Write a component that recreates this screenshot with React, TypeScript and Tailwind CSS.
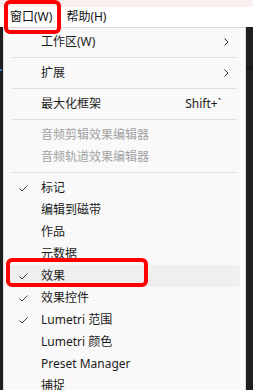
const font = { fontFamily: '"Noto Sans", "Noto Sans CJK SC", sans-serif' };

type Item =
  | { kind: 'item'; label: string; checked?: boolean; disabled?: boolean; sub?: boolean; shortcut?: string; hover?: boolean }
  | { kind: 'sep' };

const items: Item[] = [
  { kind: 'item', label: '工作区(W)', sub: true },
  { kind: 'sep' },
  { kind: 'item', label: '扩展', sub: true },
  { kind: 'sep' },
  { kind: 'item', label: '最大化框架', shortcut: 'Shift+`' },
  { kind: 'sep' },
  { kind: 'item', label: '音频剪辑效果编辑器', disabled: true },
  { kind: 'item', label: '音频轨道效果编辑器', disabled: true },
  { kind: 'sep' },
  { kind: 'item', label: '标记', checked: true },
  { kind: 'item', label: '编辑到磁带' },
  { kind: 'item', label: '作品' },
  { kind: 'item', label: '元数据' },
  { kind: 'item', label: '效果', checked: true, hover: true },
  { kind: 'item', label: '效果控件', checked: true },
  { kind: 'item', label: 'Lumetri 范围', checked: true },
  { kind: 'item', label: 'Lumetri 颜色' },
  { kind: 'item', label: 'Preset Manager' },
  { kind: 'item', label: '捕捉' },
];

function Check() {
  return (
    <svg width="9" height="7" viewBox="0 0 9 7" fill="none" stroke="#3a3a3a" strokeWidth="1">
      <polyline points="0.5,3.5 3,6 8.5,0.5" />
    </svg>
  );
}

function Chevron() {
  return (
    <svg width="5" height="8" viewBox="0 0 5 8" fill="none" stroke="#2a2a2a" strokeWidth="1">
      <polyline points="0.5,0.5 4,4 0.5,7.5" />
    </svg>
  );
}

function MenuRow({ item }: { item: Extract<Item, { kind: 'item' }> }) {
  return (
    <div
      className={
        'relative mx-[5px] flex h-[22px] items-center rounded-[4px] text-[12px] ' +
        (item.hover ? 'bg-[#efefef]' : '') +
        (item.disabled ? ' text-[#a2a2a2]' : ' text-[#1b1b1b]')
      }
    >
      <div className="flex w-[32px] justify-end pr-[13px]">{item.checked && <Check />}</div>
      <span className="flex-1 whitespace-nowrap">{item.label}</span>
      {item.shortcut && <span className="mr-[19px] whitespace-nowrap">{item.shortcut}</span>}
      {item.sub && (
        <div className="mr-[11px] flex items-center">
          <Chevron />
        </div>
      )}
    </div>
  );
}

export default function App() {
  return (
    <div className="relative h-[390px] w-[253px] overflow-hidden bg-[#1f1f1f]" style={font}>
      <div className="h-[7px] bg-[#f8efee]" />
      <div className="flex h-[20px] items-center bg-white text-[12px] text-[#111]">
        <span className="ml-[10px]">窗口(W)</span>
        <span className="ml-[14px]">帮助(H)</span>
      </div>

      <div className="flex">
        <div className="w-[3px]" />
        <div className="w-[243px] border border-[#dcdcdc] bg-[#f9f9f9] pt-[3px]">
          {items.map((it, i) =>
            it.kind === 'sep' ? (
              <div key={i} className="flex h-[9px] items-center px-[8px]">
                <div className="h-px w-full bg-[#dedede]" />
              </div>
            ) : (
              <MenuRow key={i} item={it} />
            )
          )}
        </div>
      </div>

      <div className="absolute left-0 top-[69px] h-[2px] w-[2px] bg-[#3b6fd0]" />
      <div className="absolute right-0 top-[67px] h-[3px] w-[7px] bg-[#161616]" />

      <div className="absolute left-[4px] top-0 h-[34px] w-[57px] rounded-[6px] border-[4px] border-[#ff0000]" />
      <div className="absolute left-[6px] top-[258px] h-[29px] w-[142px] rounded-[6px] border-[4px] border-[#ff0000]" />
    </div>
  );
}
